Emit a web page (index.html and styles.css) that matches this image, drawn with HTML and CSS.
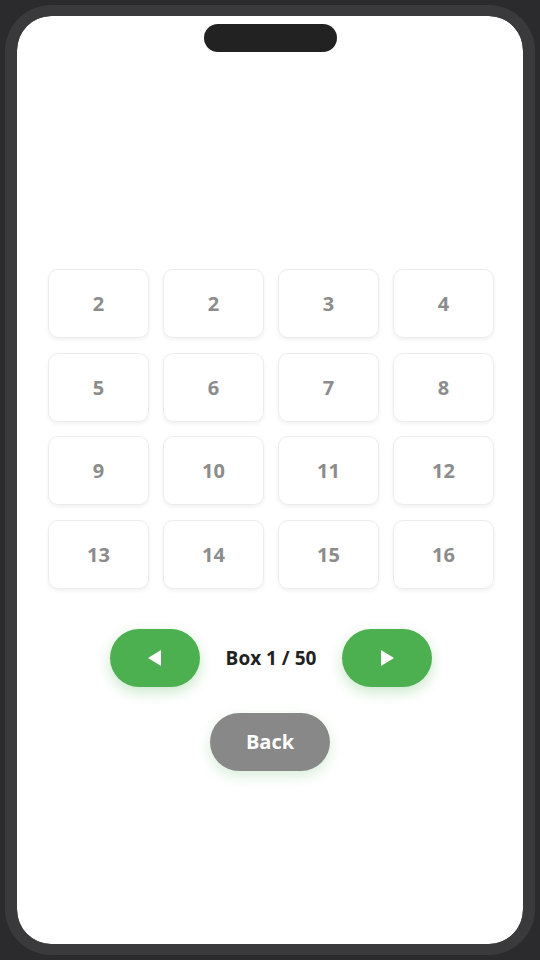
FILE: index.html
```html
<!DOCTYPE html>
<html lang="en">
<head>
  <meta charset="UTF-8">
  <title>Boxes</title>
  <link rel="stylesheet" href="styles.css">
</head>
<body>

<div class="phone">
  <div class="screen">
    <div class="notch"></div>

    <div class="grid">
      <div class="cell">2</div>
      <div class="cell">2</div>
      <div class="cell">3</div>
      <div class="cell">4</div>
      <div class="cell">5</div>
      <div class="cell">6</div>
      <div class="cell">7</div>
      <div class="cell">8</div>
      <div class="cell">9</div>
      <div class="cell">10</div>
      <div class="cell">11</div>
      <div class="cell">12</div>
      <div class="cell">13</div>
      <div class="cell">14</div>
      <div class="cell">15</div>
      <div class="cell">16</div>
    </div>

    <div class="nav">
      <button class="nav-btn" id="prevBtn">
        <svg width="14" height="16" viewBox="0 0 14 16"><polygon points="13,0 13,16 0,8" fill="#fff"/></svg>
      </button>
      <span class="label">Box 1 / 50</span>
      <button class="nav-btn" id="nextBtn">
        <svg width="14" height="16" viewBox="0 0 14 16"><polygon points="1,0 1,16 14,8" fill="#fff"/></svg>
      </button>
    </div>

    <button class="back-btn">Back</button>
  </div>
</div>

</body>
</html>
```

FILE: styles.css
```css
html, body {
  margin: 0;
  padding: 0;
  height: 100%;
  background: #2b2b2d;
  font-family: "Open Sans", "Liberation Sans", sans-serif;
  overflow: hidden;
}

.phone {
  box-sizing: border-box;
  width: 530px;
  height: 950px;
  margin: 5px;
  border: 12px solid #3a3a3c;
  border-top-width: 11px;
  border-bottom-width: 11px;
  border-radius: 46px;
  overflow: hidden;
}

.screen {
  height: 100%;
  background: #fff;
  border-radius: 34px;
  padding-top: 8px;
  box-sizing: border-box;
  display: flex;
  flex-direction: column;
  align-items: center;
}

.notch {
  width: 133px;
  height: 28px;
  border-radius: 14px;
  background: #222;
}

.grid {
  margin-top: 217px;
  display: grid;
  grid-template-columns: repeat(4, 101px);
  grid-auto-rows: 69px;
  column-gap: 14px;
  row-gap: 14.5px;
  margin-left: 2px;
}

.cell {
  box-sizing: border-box;
  border: 1px solid #ececec;
  border-radius: 10px;
  box-shadow: 0 2px 4px rgba(0, 0, 0, 0.06);
  display: flex;
  align-items: center;
  justify-content: center;
  font-size: 20px;
  font-weight: 700;
  color: #8c8c8c;
}

.nav {
  margin-top: 40px;
  margin-left: 2px;
  display: flex;
  align-items: center;
  gap: 26px;
}

.nav-btn {
  width: 90px;
  height: 58px;
  border: none;
  border-radius: 29px;
  background: #4caf50;
  box-shadow: 0 5px 14px rgba(76, 175, 80, 0.3);
  display: flex;
  align-items: center;
  justify-content: center;
  padding: 0;
  cursor: pointer;
}

.label {
  font-size: 19px;
  font-weight: 700;
  color: #222;
}

.back-btn {
  margin-top: 26px;
  width: 120px;
  height: 58px;
  border: none;
  border-radius: 29px;
  background: #888;
  color: #fff;
  font-family: inherit;
  font-size: 20px;
  font-weight: 700;
  box-shadow: 0 5px 14px rgba(76, 175, 80, 0.22);
  cursor: pointer;
}
```
